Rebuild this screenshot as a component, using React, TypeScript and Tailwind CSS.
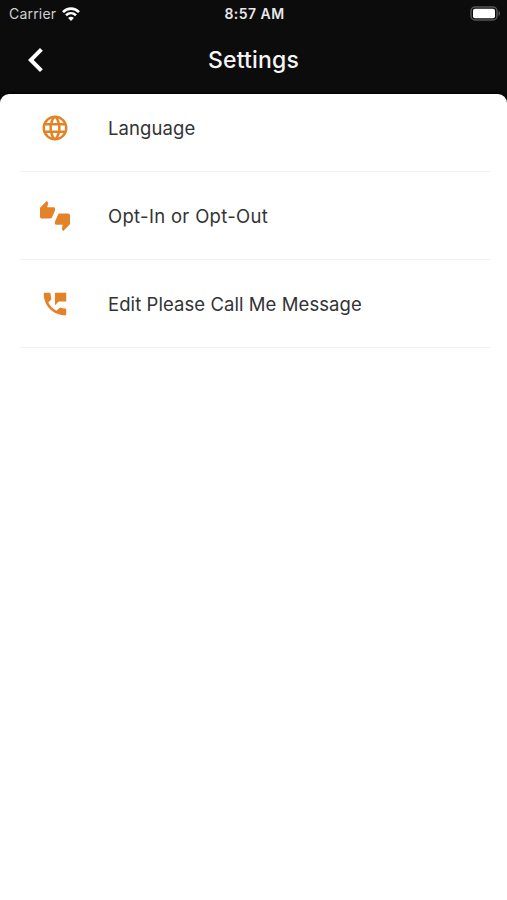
import { MdChevronLeft, MdLanguage, MdPermPhoneMsg, MdThumbsUpDown } from 'react-icons/md'

const items = [
  { label: 'Language', icon: MdLanguage, tracking: 'tracking-[0.1px]' },
  { label: 'Opt-In or Opt-Out', icon: MdThumbsUpDown, tracking: 'tracking-[0.31px]' },
  { label: 'Edit Please Call Me Message', icon: MdPermPhoneMsg, tracking: 'tracking-[0.07px]' },
]

function StatusBar() {
  return (
    <div className="grid grid-cols-3 items-center h-[27px] pl-[9px] pr-[7px] text-white">
      <div className="flex items-center gap-[6px]">
        <span className="text-[14px] leading-[18px] tracking-[0.2px] text-[#d0d0d0]">Carrier</span>
        <svg width="18" height="14" viewBox="0 0 18 14" fill="none" stroke="currentColor" strokeWidth="2.6">
          <path d="M1 5.1C5.5.5 12.5.5 17 5.1" />
          <path d="M4 8.3c2.9-2.8 7.1-2.8 10 0" />
          <path d="M9 14l-2.9-3.1c1.7-1.5 4.1-1.5 5.8 0z" fill="currentColor" stroke="none" />
        </svg>
      </div>
      <span className="text-center text-[14px] leading-[18px] font-semibold tracking-[0.45px] text-[#e8e8e8]">8:57 AM</span>
      <svg className="justify-self-end" width="30" height="15" viewBox="0 0 30 15" fill="none">
        <rect x="1" y="1" width="26" height="13" rx="4" stroke="#555" strokeWidth="1.5" />
        <rect x="3" y="2.7" width="22" height="9.6" rx="2" fill="#fff" />
        <path d="M28.5 5c2 .8 2 4.2 0 5z" fill="#555" />
      </svg>
    </div>
  )
}

export default function App() {
  return (
    <div className="flex flex-col w-full h-screen bg-[#0c0c0c] overflow-hidden font-['Inter',sans-serif]">
      <StatusBar />

      {/* title bar */}
      <header className="grid grid-cols-[60px_1fr_60px] items-center h-[67px] pb-[2px] text-white">
        <button type="button" aria-label="Back" className="pl-3">
          <MdChevronLeft size={48} />
        </button>
        <h1 className="text-center text-[23px] leading-[28px] font-medium tracking-[0.15px] text-[#f5f5f5]">Settings</h1>
      </header>

      <main className="flex-1 bg-white rounded-t-[9px] pl-5 pr-[17px] shadow-[0_0_2px_1px_#000]">
        <ul className="-mt-[10px]">
          {items.map(({ label, icon: Icon, tracking }) => (
            <li key={label} className="flex items-center h-[88px] pl-[19.5px] gap-[38.5px] border-b border-[#f1f1f1]">
              <Icon size={30} className="shrink-0 text-[#e38227]" />
              <span className={`text-[18.5px] leading-[24px] text-[#333] ${tracking}`}>{label}</span>
            </li>
          ))}
        </ul>
      </main>
    </div>
  )
}
